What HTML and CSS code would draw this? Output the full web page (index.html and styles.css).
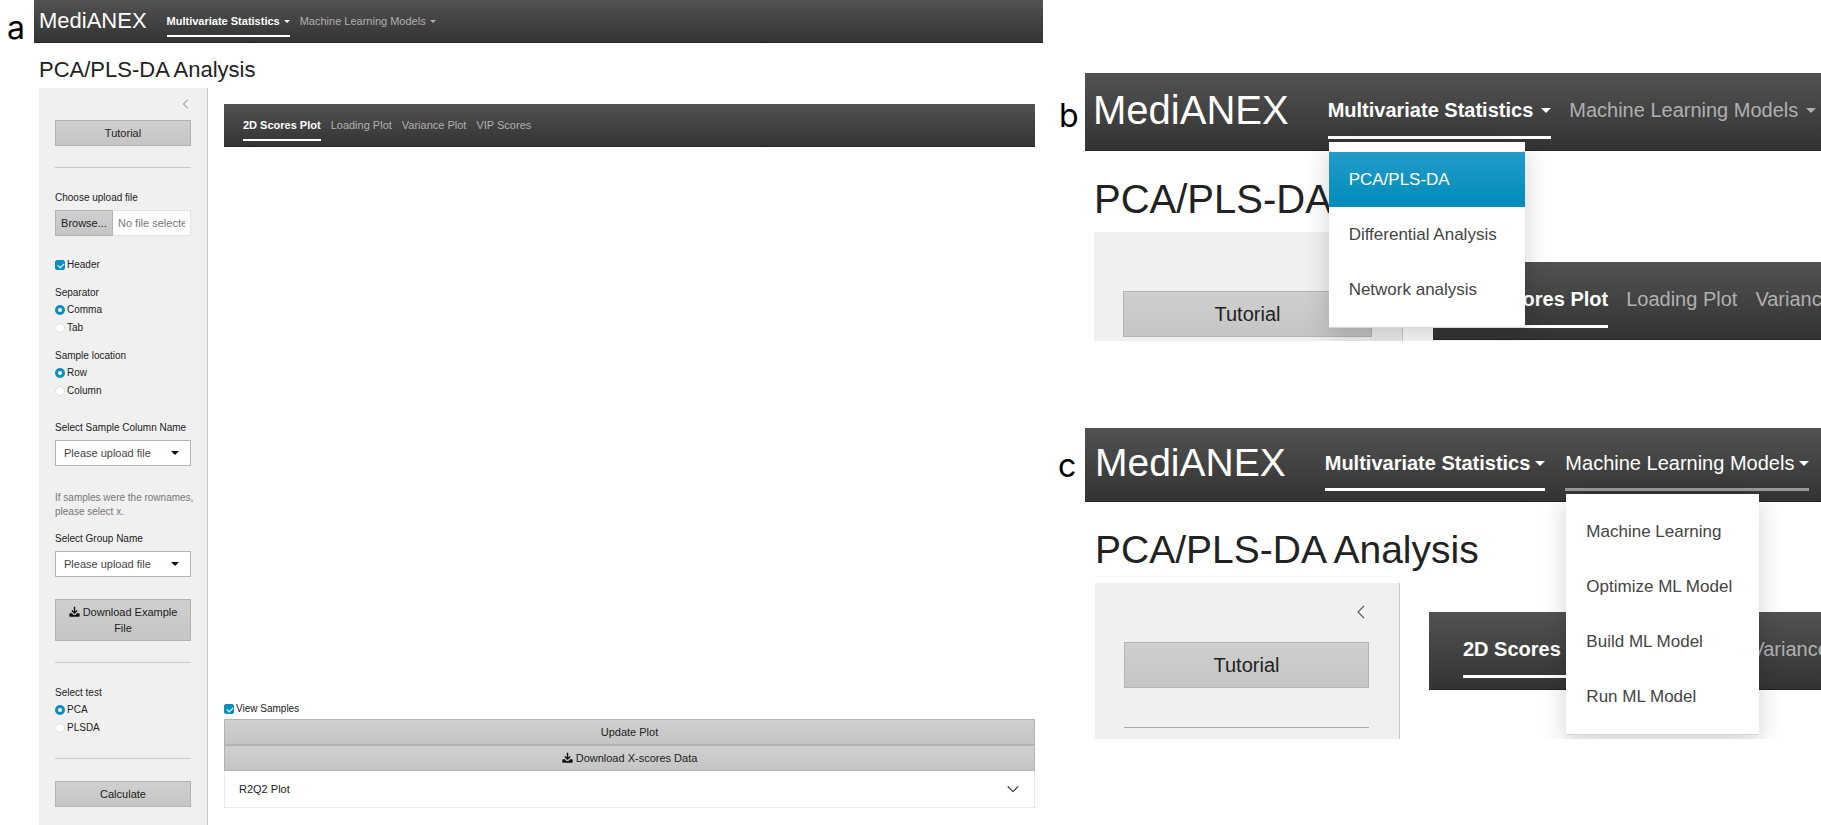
FILE: index.html
```html
<!DOCTYPE html>
<html lang="en">
<head>
<meta charset="utf-8">
<title>MediANEX</title>
<link rel="stylesheet" href="styles.css">
</head>
<body>
<svg class="defs" aria-hidden="true">
  <symbol id="i-left" viewBox="0 0 16 16"><path d="M11 2 5 8l6 6" fill="none" stroke="currentColor" stroke-width="1.1"/></symbol>
  <symbol id="i-down" viewBox="0 0 16 16"><path d="m2 5 6 6 6-6" fill="none" stroke="currentColor" stroke-width="1.2"/></symbol>
  <symbol id="i-download" viewBox="0 0 16 16"><path d="M8 1v9M4.200 6.600 8 10.400l3.800-3.800" fill="none" stroke="currentColor" stroke-width="2"/><path d="M1.500 10.500h3L6.500 13h3l2-2.500h3c.6 0 1 .4 1 1v3c0 .6-.4 1-1 1h-13c-.6 0-1-.4-1-1v-3c0-.6.4-1 1-1z" fill="currentColor"/></symbol>
</svg>
<main class="board">
  <section class="figure figure-a">
    <span class="letter">a</span>
    <div class="app">
      <nav class="bar">
        <a class="brand" href="#">MediANEX</a>
        <ul class="links">
          <li><a class="link active" href="#">Multivariate Statistics<i class="caret"></i></a></li>
          <li><a class="link" href="#">Machine Learning Models<i class="caret"></i></a></li>
        </ul>
      </nav>
      <h1 class="title">PCA/PLS-DA Analysis</h1>
      <div class="layout">
        <form class="sidebar">
          <button class="toggle" type="button" aria-label="Collapse sidebar"><svg class="chevron"><use href="#i-left"/></svg></button>
          <button class="btn" type="button">Tutorial</button>
          <hr class="rule">
          <label class="label" for="upload">Choose upload file</label>
          <div class="file">
            <label class="btn browse" for="upload">Browse...</label>
            <input id="upload" type="file" hidden>
            <input class="filename" type="text" readonly placeholder="No file selected" aria-label="Selected file">
          </div>
          <label class="choice header-choice"><input class="check" type="checkbox" checked>Header</label>
          <fieldset class="group">
            <legend class="label">Separator</legend>
            <label class="choice"><input class="radio" type="radio" name="sep" checked>Comma</label>
            <label class="choice"><input class="radio" type="radio" name="sep">Tab</label>
          </fieldset>
          <fieldset class="group">
            <legend class="label">Sample location</legend>
            <label class="choice"><input class="radio" type="radio" name="loc" checked>Row</label>
            <label class="choice"><input class="radio" type="radio" name="loc">Column</label>
          </fieldset>
          <div class="field">
            <label class="label" for="column">Select Sample Column Name</label>
            <div class="pick"><select id="column"><option>Please upload file</option></select><i class="caret"></i></div>
          </div>
          <p class="help">If samples were the rownames,<br>please select x.</p>
          <label class="label" for="groupname">Select Group Name</label>
          <div class="pick"><select id="groupname"><option>Please upload file</option></select><i class="caret"></i></div>
          <button class="btn example" type="button"><svg class="icon"><use href="#i-download"/></svg> Download Example File</button>
          <hr class="rule">
          <fieldset class="group test">
            <legend class="label">Select test</legend>
            <label class="choice"><input class="radio" type="radio" name="test" checked>PCA</label>
            <label class="choice"><input class="radio" type="radio" name="test">PLSDA</label>
          </fieldset>
          <hr class="rule">
          <button class="btn calculate" type="button">Calculate</button>
        </form>
        <div class="content">
          <nav class="bar tabs">
            <ul class="links">
              <li><a class="link active" href="#">2D Scores Plot</a></li>
              <li><a class="link" href="#">Loading Plot</a></li>
              <li><a class="link" href="#">Variance Plot</a></li>
              <li><a class="link" href="#">VIP Scores</a></li>
            </ul>
          </nav>
          <div class="plot"></div>
          <label class="choice"><input class="check" type="checkbox" checked>View Samples</label>
          <button class="btn update" type="button">Update Plot</button>
          <button class="btn" type="button"><svg class="icon"><use href="#i-download"/></svg> Download X-scores Data</button>
          <button class="accordion" type="button">R2Q2 Plot<svg class="expand"><use href="#i-down"/></svg></button>
        </div>
      </div>
    </div>
  </section>

  <div class="details">
    <section class="figure figure-b">
      <span class="letter">b</span>
      <div class="app">
        <nav class="bar">
          <a class="brand" href="#">MediANEX</a>
          <ul class="links">
            <li><a class="link active" href="#">Multivariate Statistics<i class="caret"></i></a>
              <div class="menu">
                <a class="item selected" href="#">PCA/PLS-DA</a>
                <a class="item" href="#">Differential Analysis</a>
                <a class="item" href="#">Network analysis</a>
              </div>
            </li>
            <li><a class="link" href="#">Machine Learning Models<i class="caret"></i></a></li>
          </ul>
        </nav>
        <h1 class="title">PCA/PLS-DA</h1>
        <div class="layout">
          <div class="sidebar">
            <button class="btn" type="button">Tutorial</button>
          </div>
          <div class="content">
            <nav class="bar tabs">
              <ul class="links">
                <li><a class="link active" href="#">2D Scores Plot</a></li>
                <li><a class="link" href="#">Loading Plot</a></li>
                <li><a class="link" href="#">Variance Plot</a></li>
              </ul>
            </nav>
          </div>
        </div>
      </div>
    </section>

    <section class="figure figure-c">
      <span class="letter">c</span>
      <div class="app">
        <nav class="bar">
          <a class="brand" href="#">MediANEX</a>
          <ul class="links">
            <li><a class="link active" href="#">Multivariate Statistics<i class="caret"></i></a></li>
            <li><a class="link open" href="#">Machine Learning Models<i class="caret"></i></a>
              <div class="menu">
                <a class="item" href="#">Machine Learning</a>
                <a class="item" href="#">Optimize ML Model</a>
                <a class="item" href="#">Build ML Model</a>
                <a class="item" href="#">Run ML Model</a>
              </div>
            </li>
          </ul>
        </nav>
        <h1 class="title">PCA/PLS-DA Analysis</h1>
        <div class="layout">
          <div class="sidebar">
            <button class="toggle" type="button" aria-label="Collapse sidebar"><svg class="chevron"><use href="#i-left"/></svg></button>
            <button class="btn" type="button">Tutorial</button>
            <hr class="rule">
          </div>
          <div class="content">
            <nav class="bar tabs">
              <ul class="links">
                <li><a class="link active" href="#">2D Scores Plot</a></li>
                <li><a class="link" href="#">Loading Plot</a></li>
                <li><a class="link" href="#">Variance Plot</a></li>
              </ul>
            </nav>
          </div>
        </div>
      </div>
    </section>
  </div>
</main>
</body>
</html>
```
FILE: styles.css
```css
* { box-sizing: border-box; }
body {
  margin: 0;
  background: #fff;
  color: #222;
  font-family: "Liberation Sans", Arial, sans-serif;
  font-size: 11px;
  line-height: 16px;
}
button, input, select { font: inherit; color: inherit; }
a { color: inherit; text-decoration: none; }
.defs { display: none; }

.board { display: flex; min-height: 100vh; overflow: hidden; }
.figure { display: flex; }
.figure-a { flex: 1043 1 0; }
.details { flex: 778 1 0; min-width: 0; padding-top: 73px; }
.letter {
  flex: none;
  color: #000;
  font-family: Inter, "Open Sans", sans-serif;
  font-size: 32px;
  line-height: 40px;
}
.app { flex: 1; min-width: 0; display: flex; flex-direction: column; }

/* navigation bars */
.bar {
  display: flex;
  align-items: flex-start;
  padding: 13px 0 5px 5px;
  background: linear-gradient(#525252, #333);
  border-bottom: 1px solid #262626;
  white-space: nowrap;
}
.brand { color: #fff; font-size: 22px; margin-right: 20px; }
.links { display: flex; gap: 10px; margin: 0; padding: 0; list-style: none; }
.links li { position: relative; flex: none; }
.link {
  display: flex;
  align-items: center;
  gap: 4px;
  padding-bottom: 6px;
  border-bottom: 2px solid transparent;
  color: #b0b0b0;
}
.link.active { color: #fff; font-weight: bold; border-color: #fff; }
.link.open { color: #fff; border-color: #999; }
.caret {
  width: 0;
  height: 0;
  border: solid transparent;
  border-width: 3px 3px 0;
  border-top-color: currentColor;
}
.tabs { padding-left: 19px; }
.title { margin: 14px 0 5px 5px; font-size: 22px; line-height: 26px; font-weight: normal; white-space: nowrap; }

/* page body */
.layout { flex: 1; display: flex; margin-left: 5px; }
.sidebar {
  flex: none;
  width: 169px;
  padding: 8px 16px 0;
  background: #f0f0f0;
  border-right: 1px solid #c8c8c8;
}
.content { flex: 1; min-width: 0; display: flex; flex-direction: column; padding: 16px 8px 17px 16px; }
.plot { flex: 1; }
.toggle { display: block; margin: 0 0 8px auto; padding: 0; border: 0; background: none; color: #555; }
.chevron { display: block; width: 12px; height: 16px; }
.figure-a .chevron { width: 11px; }
.btn {
  display: block;
  width: 100%;
  padding: 4px 12px;
  border: 1px solid #b3b3b3;
  background: linear-gradient(#cfcfcf, #c5c5c5);
  color: #222;
  text-align: center;
}
.icon { width: 11px; height: 11px; vertical-align: -1px; color: #111; }
.rule { margin: 21px 0 22px; border: 0; border-top: 1px solid #c8c8c8; }
.label { display: block; padding: 0; font-size: 10px; line-height: 16px; }
.file { display: flex; margin: 4px 0 20px; }
.browse { flex: none; width: 58px; padding: 4px 0; }
.filename { flex: 1; min-width: 0; padding: 0 5px 0 5px; border: 1px solid #dee2e6; border-left: 0; border-radius: 0; background: #fff; }
.filename::placeholder { color: #777; opacity: 1; }
.choice { display: flex; align-items: center; gap: 2px; font-size: 10px; line-height: 18px; }
.check, .radio { appearance: none; flex: none; width: 10px; height: 10px; margin: 0; background: #fff; border: 1px solid #e0e0e0; }
.radio { border-radius: 50%; }
.radio:checked { border: 3px solid #0b90bd; }
.check { border-radius: 2px; }
.check:checked { position: relative; background: #0b90bd; border-color: #0b90bd; }
.check:checked::after {
  content: "";
  position: absolute;
  left: 3px;
  top: 1px;
  width: 3px;
  height: 5px;
  border: solid #fff;
  border-width: 0 1px 1px 0;
  transform: rotate(45deg);
}
.group { margin: 11px 0 0; padding: 0; border: 0; min-width: 0; }
.test { margin: 0; }
.field { margin-top: 20px; }
.pick { position: relative; margin-top: 4px; }
.pick select {
  appearance: none;
  display: block;
  width: 100%;
  height: 26px;
  padding: 0 20px 0 8px;
  border: 1px solid #adb5bd;
  border-radius: 0;
  background: #fff;
  color: #444;
}
.pick .caret { position: absolute; right: 12px; top: 11px; border-width: 4px 4px 0; border-top-color: #111; pointer-events: none; }
.help { margin: 25px 0 12px; font-size: 10px; line-height: 14px; color: #777; white-space: nowrap; }
.example { margin-top: 22px; }
.accordion {
  display: flex;
  align-items: center;
  justify-content: space-between;
  padding: 10px 14px;
  border: 1px solid #e6e8ea;
  border-top: 0;
  background: #fff;
  text-align: left;
}
.expand { width: 14px; height: 14px; }
.update { margin-top: 1px; }

.figure-a .letter { width: 34px; padding: 8px 0 0 7px; }

/* enlarged views */
.figure-b .letter, .figure-c .letter { width: 42px; }
.figure-b .letter { padding: 23px 0 0 16px; }
.figure-c .letter { padding: 18px 0 0 15px; }
.figure-b { height: 268px; margin-bottom: 87px; }
.figure-c { height: 311px; }
.details .app { overflow: hidden; }
.details .bar { padding: 23px 0 11px 8px; font-size: 20px; line-height: 28px; }
.figure-c .app > .bar { padding: 21px 0 10px 10px; }
.details .brand { font-size: 40px; margin-right: 39px; }
.figure-c .brand { font-size: 39px; }
.details .links { gap: 18px; }
.figure-c .app > .bar .links { gap: 20px; }
.details .link { gap: 8px; padding-bottom: 12px; border-bottom-width: 3px; }
.figure-c .app > .bar .link { gap: 5px; padding-bottom: 11px; }
.details .caret { border-width: 5px 5px 0; }
.details .title { margin: 24px 0 9px 9px; font-size: 40px; line-height: 48px; }
.figure-c .title { margin: 24px 0 9px 10px; font-size: 39px; }
.details .layout { margin-left: 9px; }
.figure-c .layout { margin-left: 10px; }
.details .sidebar { width: 309px; padding: 59px 30px 0 29px; }
.figure-c .sidebar { width: 305px; padding-top: 19px; }
.details .toggle { margin-bottom: 20px; }
.details .chevron { width: 16px; height: 20px; }
.details .btn { font-size: 20px; line-height: 28px; padding: 8px 0; }
.details .rule { margin: 39px 0 0; border-color: #aaa; }
.details .content { padding: 30px 0 0 30px; }
.figure-c .content { padding: 29px 0 0 29px; }
.details .tabs { padding-left: 34px; }
.menu {
  position: absolute;
  z-index: 2;
  top: calc(100% + 3px);
  left: 1px;
  min-width: 196px;
  padding: 10px 0;
  background: #fff;
  border-bottom: 1px solid #d5d5d5;
  box-shadow: 0 8px 24px rgba(0, 0, 0, .18);
}
.item { display: block; padding: 0 20px; color: #444; font-size: 17px; line-height: 55px; }
.figure-c .menu { min-width: 193px; }
.item.selected { color: #fff; background: linear-gradient(#239bc8, #008cba); }
```
